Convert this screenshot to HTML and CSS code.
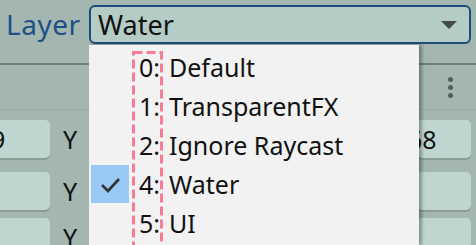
FILE: index.html
```html
<!DOCTYPE html>
<html lang="en">
<head>
    <meta charset="UTF-8">
    <title>Layer</title>
    <link rel="stylesheet" href="styles.css">
</head>
<body>
    <div class="inspector">
        <div class="top">
            <span class="label">Layer</span>
            <div class="field">
                <span>Water</span>
                <span class="arrow"></span>
            </div>
        </div>

        <div class="toolbar">
            <div class="kebab"><i></i><i></i><i></i></div>
        </div>

        <div class="rows">
            <div class="row first">
                <div class="box left">9</div>
                <span class="axis">Y</span>
                <div class="box right">68</div>
            </div>
            <div class="row">
                <div class="box left"></div>
                <span class="axis">Y</span>
                <div class="box right"></div>
            </div>
            <div class="row last">
                <div class="box left"></div>
                <span class="axis">Y</span>
                <div class="box right"></div>
            </div>
        </div>
    </div>

    <div class="menu">
        <svg class="dashes" width="34" height="200" viewBox="0 0 34 200">
            <rect x="1.5" y="1.5" width="28" height="240" fill="none" stroke="#f77d97" stroke-width="3" stroke-dasharray="9 4"/>
        </svg>
        <div class="item"><span class="check"></span><span class="num">0:</span><span>Default</span></div>
        <div class="item"><span class="check"></span><span class="num">1:</span><span>TransparentFX</span></div>
        <div class="item"><span class="check"></span><span class="num">2:</span><span>Ignore Raycast</span></div>
        <div class="item selected">
            <span class="check">
                <svg width="38" height="38" viewBox="0 0 38 38">
                    <path d="M11 20 L17 26 L28 14" fill="none" stroke="#333" stroke-width="2.6"/>
                </svg>
            </span>
            <span class="num">4:</span><span>Water</span>
        </div>
        <div class="item"><span class="check"></span><span class="num">5:</span><span>UI</span></div>
    </div>
</body>
</html>
```

FILE: styles.css
```css
body {
    margin: 0;
    width: 476px;
    height: 245px;
    overflow: hidden;
    position: relative;
    background-color: #a3b6b0;
    font-family: "Noto Sans", "Open Sans", sans-serif;
    font-size: 25px;
    color: #111;
}
.top {
    height: 63px;
    display: flex;
    align-items: flex-start;
    padding: 5px 5px 0 6px;
    box-sizing: border-box;
}
.label {
    width: 83px;
    height: 39px;
    line-height: 38px;
    font-size: 28px;
    letter-spacing: 0.5px;
    color: #1e4f88;
}
.field {
    flex: 1;
    height: 39px;
    box-sizing: border-box;
    border: 2px solid #1d4c7c;
    border-radius: 6px;
    background-color: #b4ccc5;
    display: flex;
    align-items: center;
    justify-content: space-between;
    padding: 0 12px 0 7px;
    line-height: 34px;
    font-size: 27px;
}
.arrow {
    width: 0;
    height: 0;
    border-left: 8px solid transparent;
    border-right: 8px solid transparent;
    border-top: 8px solid #454b49;
}
.toolbar {
    height: 47px;
    border-top: 2px solid #6f7d78;
    border-bottom: 1px solid #97aaa4;
    box-sizing: border-box;
    display: flex;
    justify-content: flex-end;
    align-items: center;
    padding-right: 23px;
}
.kebab {
    display: flex;
    flex-direction: column;
    gap: 3px;
}
.kebab i {
    width: 5px;
    height: 5px;
    border-radius: 50%;
    background-color: #555c5a;
}
.rows {
    padding-top: 9px;
}
.row {
    display: flex;
    align-items: center;
    height: 39px;
    margin-bottom: 12px;
}
.row.first {
    margin-bottom: 13px;
}
.row.last {
    margin-top: -5px;
}
.box {
    height: 38px;
    box-sizing: border-box;
    background-color: #bed6cf;
    border-radius: 5px;
    box-shadow: 0 2px 0 #8a9c96;
    line-height: 38px;
    overflow: hidden;
    white-space: nowrap;
}
.box.left {
    width: 62px;
    margin-left: -12px;
    text-indent: 3px;
}
.axis {
    width: 367px;
    padding-left: 13px;
    box-sizing: border-box;
    line-height: 38px;
}
.box.right {
    width: 54px;
    text-indent: -9px;
}
.menu {
    position: absolute;
    left: 89px;
    top: 45px;
    width: 330px;
    bottom: 0;
    background-color: #f2f2f2;
    box-shadow: 3px 0 3px rgba(0, 0, 0, 0.3);
    padding-top: 2px;
    box-sizing: border-box;
}
.dashes {
    position: absolute;
    left: 43px;
    top: 6px;
}
.item {
    height: 39px;
    display: flex;
    align-items: center;
    padding-left: 2px;
    line-height: 38px;
}
.check {
    width: 38px;
    height: 38px;
    margin-right: 10px;
    flex-shrink: 0;
}
.selected .check {
    background-color: #99c9f4;
}
.check svg {
    display: block;
}
.num {
    width: 30px;
}
```
